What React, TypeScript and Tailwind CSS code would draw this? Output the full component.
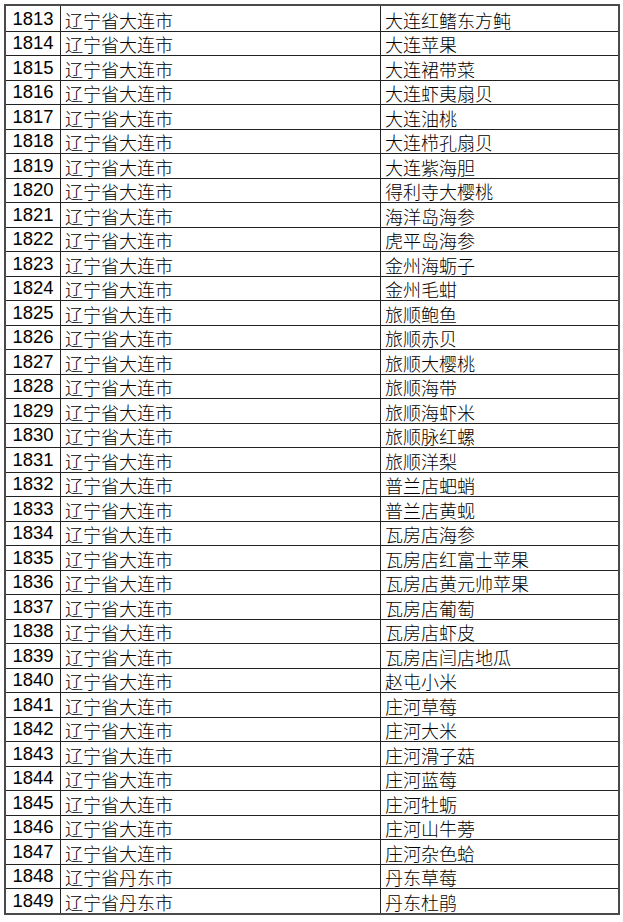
const rows: [number, string, string][] = [
  [1813, '辽宁省大连市', '大连红鳍东方鲀'],
  [1814, '辽宁省大连市', '大连苹果'],
  [1815, '辽宁省大连市', '大连裙带菜'],
  [1816, '辽宁省大连市', '大连虾夷扇贝'],
  [1817, '辽宁省大连市', '大连油桃'],
  [1818, '辽宁省大连市', '大连栉孔扇贝'],
  [1819, '辽宁省大连市', '大连紫海胆'],
  [1820, '辽宁省大连市', '得利寺大樱桃'],
  [1821, '辽宁省大连市', '海洋岛海参'],
  [1822, '辽宁省大连市', '虎平岛海参'],
  [1823, '辽宁省大连市', '金州海蛎子'],
  [1824, '辽宁省大连市', '金州毛蚶'],
  [1825, '辽宁省大连市', '旅顺鲍鱼'],
  [1826, '辽宁省大连市', '旅顺赤贝'],
  [1827, '辽宁省大连市', '旅顺大樱桃'],
  [1828, '辽宁省大连市', '旅顺海带'],
  [1829, '辽宁省大连市', '旅顺海虾米'],
  [1830, '辽宁省大连市', '旅顺脉红螺'],
  [1831, '辽宁省大连市', '旅顺洋梨'],
  [1832, '辽宁省大连市', '普兰店蚆蛸'],
  [1833, '辽宁省大连市', '普兰店黄蚬'],
  [1834, '辽宁省大连市', '瓦房店海参'],
  [1835, '辽宁省大连市', '瓦房店红富士苹果'],
  [1836, '辽宁省大连市', '瓦房店黄元帅苹果'],
  [1837, '辽宁省大连市', '瓦房店葡萄'],
  [1838, '辽宁省大连市', '瓦房店虾皮'],
  [1839, '辽宁省大连市', '瓦房店闫店地瓜'],
  [1840, '辽宁省大连市', '赵屯小米'],
  [1841, '辽宁省大连市', '庄河草莓'],
  [1842, '辽宁省大连市', '庄河大米'],
  [1843, '辽宁省大连市', '庄河滑子菇'],
  [1844, '辽宁省大连市', '庄河蓝莓'],
  [1845, '辽宁省大连市', '庄河牡蛎'],
  [1846, '辽宁省大连市', '庄河山牛蒡'],
  [1847, '辽宁省大连市', '庄河杂色蛤'],
  [1848, '辽宁省丹东市', '丹东草莓'],
  [1849, '辽宁省丹东市', '丹东杜鹃'],
];

const cjk = { fontFamily: '"Noto Sans CJK SC", sans-serif' };

export default function App() {
  return (
    <div className="min-h-screen bg-white pt-[4px] pl-[4px]">
      <div className="w-[616px] border-2 border-[#4a4a4a] text-black">
        {rows.map(([no, city, name], i) => (
          <div
            key={no}
            className={`flex h-[24.5px] ${i > 0 ? 'border-t border-[#222]' : ''}`}
          >
            <div
              className="flex w-[55px] shrink-0 items-end justify-center border-r border-[#222] pb-[1px] text-[18.5px] leading-[22px]"
              style={{ fontFamily: '"Liberation Sans", Arial, sans-serif' }}
            >
              {no}
            </div>
            <div
              className="flex w-[320px] shrink-0 items-end border-r border-[#222] pl-[4px] text-[18px] font-light leading-[22px]"
              style={cjk}
            >
              {city}
            </div>
            <div className="flex flex-1 items-end pl-[4px] text-[18px] font-light leading-[22px]" style={cjk}>
              {name}
            </div>
          </div>
        ))}
      </div>
    </div>
  );
}
